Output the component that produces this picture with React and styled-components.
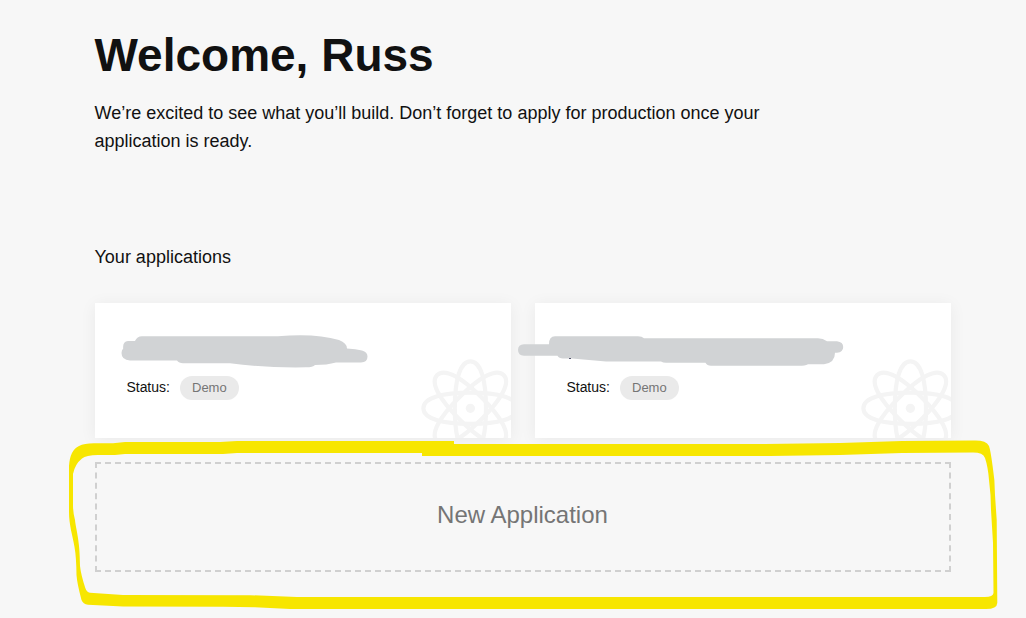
import React from "react";
import styled, { createGlobalStyle } from "styled-components";

const GlobalStyle = createGlobalStyle`
  body {
    margin: 0;
    background: #f7f7f7;
    color: #111;
    font-family: "Liberation Sans", Arial, sans-serif;
  }
`;

const Page = styled.main`
  position: relative;
  box-sizing: border-box;
  width: 1026px;
  height: 618px;
  padding: 28px 75px 0 94.5px;
  overflow: hidden;
`;

const Title = styled.h1`
  margin: 0;
  font-size: 46px;
  line-height: 54px;
  font-weight: 700;
`;

const Intro = styled.p`
  margin: 17px 0 0;
  width: 690px;
  font-size: 18px;
  line-height: 28px;
`;

const SectionTitle = styled.h2`
  margin: 88px 0 0;
  font-size: 18px;
  line-height: 28px;
  font-weight: 400;
`;

const CardGrid = styled.div`
  display: grid;
  grid-template-columns: 1fr 1fr;
  gap: 24px;
  margin: 32px 0 0 0.5px;
`;

const AppCard = styled.article`
  position: relative;
  box-sizing: border-box;
  height: 135px;
  padding: 73px 31.5px 0;
  background: #fff;
  box-shadow: 0 2px 16px rgba(0, 0, 0, 0.06);
`;

const StatusRow = styled.div`
  display: flex;
  align-items: center;
  font-size: 14px;
  line-height: 24px;
`;

const StatusLabel = styled.span`
  width: 53.5px;
  padding-bottom: 2px;
  line-height: 22px;
  letter-spacing: -0.05px;
`;

const Badge = styled.span`
  box-sizing: border-box;
  height: 24px;
  padding: 0 12px;
  border-radius: 12px;
  background: #eaeaea;
  color: #757575;
  font-size: 13px;
  line-height: 24px;
`;

const AtomMark = styled.svg`
  position: absolute;
  right: 0;
  bottom: 0;
  width: 92px;
  height: 80px;
`;

const NewApplication = styled.button`
  display: flex;
  align-items: center;
  justify-content: center;
  box-sizing: border-box;
  width: 856px;
  height: 110px;
  margin: 24px 0 0 0.5px;
  padding: 0 1px 4px 0;
  border: 2px dashed #d0d0d0;
  background: transparent;
  color: #757575;
  font: 400 24px/28px "Liberation Sans", Arial, sans-serif;
`;

const Ink = styled.svg`
  position: absolute;
  top: 0;
  left: 0;
  pointer-events: none;
`;

function Atom() {
  return (
    <AtomMark viewBox="0 0 92 80" fill="none" stroke="#f4f4f4" strokeWidth="4.2">
      {[0, 45, 90, 135].map((angle) => (
        <path
          key={angle}
          d="M-47 0 C-47 -10.500 -28 -15.600 0 -15.600 S47 -10.500 47 0 S28 15.600 0 15.600 S-47 10.500 -47 0 Z"
          transform={`translate(51.4 50.3) rotate(${angle})`}
        />
      ))}
      <circle cx="51.4" cy="50.3" r="4.6" fill="#f4f4f4" stroke="none" />
    </AtomMark>
  );
}

function ApplicationCard({ status }) {
  return (
    <AppCard>
      <StatusRow>
        <StatusLabel>Status:</StatusLabel>
        <Badge>{status}</Badge>
      </StatusRow>
      <Atom />
    </AppCard>
  );
}

function Annotations() {
  return (
    <Ink width="1026" height="618" viewBox="0 0 1026 618">
      <g fill="#d1d3d5">
        <path d="M128 341 H135 Q137 336.3 142 336.3 H278 Q315 333 339 340 Q347 343 347 348.5 Q356 349 362 350.5 Q367.500 352 367.500 356.500 Q367.500 362.300 361 362.500 H336 Q327 365 315 365 Q313 367.300 306 367.300 Q264 368 230 363.300 H183 Q179 363.300 177 360.500 H130 Q121.500 360 121.500 353 Q121.500 350 123.200 348.500 Q122.500 341.500 128 341 Z" />
        <path d="M524 344.300 H549 Q549 336.300 555 336.300 H638 Q642 336.300 644 338.300 H818 Q823 338.500 827 341.200 H837 Q843.200 342 843.200 347 Q843.200 352 837 352.800 H835 Q835 363 824 364.300 H808 Q805 365.800 799 365.800 H711 Q707 365.800 705.500 362.800 H666 Q663 362.800 661 361.600 H606 L572 358.500 H563 Q559 358.500 557.500 355.800 H524 Q518 355.500 518 350 Q518 344.500 524 344.300 Z" />
      </g>
      <path d="M569 358.500 H571" stroke="#55566f" strokeWidth="1" />
      <path
        fill="#f7e600"
        fillRule="evenodd"
        d="M69 466 Q70 450 79 446 Q84 443.300 94 443.300 H113 L125 442 H220 L237 441 H454 V444 H765 L840 443 L902 441 L973 440.600 Q986 440 989 446 Q990.500 450 992.700 466.700 Q995 480 995 495 L996.700 520 L997.300 603 Q997 609 986 609 H290 L255 607.300 L223 606.800 L123 606.600 L88 604.800 Q83 604 81.500 600 Q77 583 76.500 575 Q76.300 557 74.500 547 C72.500 535 69 525 69 512 Z
        M73 474 Q75 464 82 458.500 Q86 455 98 455 H115 L125 454 H223 L237 453 H422 V456 H770 L840 455 L902 453 L973 452.600 Q983 452.600 985 458 Q988 467 989 480 Q991 495 991 510 L993 543 L993.500 593 Q993 597 985 597 H297 L250 595.200 L123 595 L90 592.800 Q86.500 592 85.300 588 Q81 575 80 566 C80 540 76 530 75 520 Q73 512 73 506 Z"
      />
    </Ink>
  );
}

export default function App() {
  return (
    <>
      <GlobalStyle />
      <Page>
        <Title>Welcome, Russ</Title>
        <Intro>
          We’re excited to see what you’ll build. Don’t forget to apply for
          production once your application is ready.
        </Intro>
        <SectionTitle>Your applications</SectionTitle>
        <CardGrid>
          <ApplicationCard status="Demo" />
          <ApplicationCard status="Demo" />
        </CardGrid>
        <NewApplication>New Application</NewApplication>
        <Annotations />
      </Page>
    </>
  );
}
